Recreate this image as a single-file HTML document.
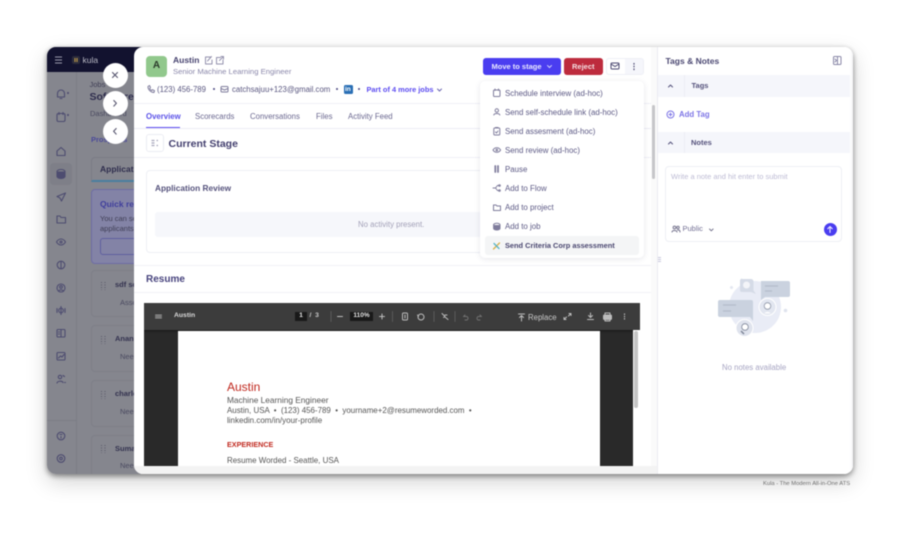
<!DOCTYPE html>
<html><head><meta charset="utf-8">
<style>
html,body{margin:0;padding:0;background:#fff;width:900px;height:533px;overflow:hidden}
body{font-family:"Liberation Sans",sans-serif;position:relative;color:#3f3b6b}
#all{position:absolute;left:0;top:0;width:900px;height:533px;filter:blur(.45px)}
.a{position:absolute}
.t{position:absolute;white-space:nowrap;line-height:12px;font-size:7.9px}
.b{font-weight:bold}
svg{position:absolute;left:0;top:0;fill:none}
.i{stroke:#7f7c9c;stroke-width:1;stroke-linecap:round;stroke-linejoin:round}
.s{stroke:#4d4c70;stroke-width:1.1;stroke-linecap:round;stroke-linejoin:round}
.c{position:absolute;width:25px;height:25px;border-radius:50%;background:#fff;left:102.5px}
</style></head><body><div id="all">

<!-- window -->
<div class="a" style="left:47px;top:47px;width:806px;height:427px;border-radius:9px;box-shadow:0 2px 6px rgba(0,0,0,.45),0 8px 22px rgba(0,0,0,.18)"></div>
<div class="a" style="left:47px;top:47px;width:100px;height:427px;background:#85868e;border-radius:9px 0 0 9px;overflow:hidden">
  <div class="a" style="left:0;top:0;width:100px;height:25px;background:#12122f"></div>
  <div class="a" style="left:29px;top:25px;width:1px;height:402px;background:#7c7d86"></div>
  <div class="a" style="left:3px;top:116px;width:22px;height:22px;border-radius:4px;background:#7e7f88"></div>
  <div class="a" style="left:0;top:373px;width:29px;height:1px;background:#7c7d86"></div>
</div>
<svg width="900" height="533">
  <path d="M55 57h7M55 60h7M55 63h7" stroke="#9a9aaa" stroke-width="1"/>
  <rect x="72" y="56" width="8" height="8" rx="2" fill="#2c2c3c"/>
  <path d="M75 58v4M77 58v4" stroke="#c9a04a" stroke-width="1"/>
  <g class="s">
    <path d="M57.500 97v-3.500a3.500 3.500 0 0 1 7 0v3.500zM60 98.500h2"/>
    <rect x="57" y="113.500" width="8" height="8" rx="1.500"/><path d="M59 112.500v2M63 112.500v2"/>
    <path d="M57 151l4-3.500 4 3.500v4.500h-8z"/>
    <ellipse cx="61" cy="171.500" rx="4" ry="2"/><path d="M57 171.500v5c0 1 2 2 4 2s4-1 4-2v-5" fill="#4d4c70"/>
    <path d="M65.500 193l-8.500 3.500 3 1.500 1.500 3z"/>
    <path d="M57 216h3l1 1.500h4.500v5.500h-8.500z"/>
    <path d="M56.500 242c1.500-2.500 3-3 4.500-3s3 .5 4.500 3c-1.500 2.500-3 3-4.500 3s-3-.5-4.500-3z"/><circle cx="61" cy="242" r="1"/>
    <circle cx="61" cy="265" r="3.800"/><path d="M61 261.500v7"/>
    <circle cx="61" cy="288" r="4"/><circle cx="61" cy="287" r="1.300"/><path d="M58.500 291c1-1.500 4-1.500 5 0"/>
    <circle cx="61" cy="310.500" r="2.300"/><path d="M57 308.500v4M65 308.500v4M61 306.500v8"/>
    <rect x="57" y="329.500" width="8" height="7.500" rx="1"/><path d="M61 329.500v7.500M58.500 332h1M58.500 334h1"/>
    <rect x="57" y="352.500" width="8" height="7.500" rx="1"/><path d="M58.500 358l2-2 1.500 1 2-2.500"/>
    <circle cx="60" cy="377" r="1.700"/><path d="M57 383c.5-2 5-2.500 6-.5M63 375.500l1.500 1M64.500 382.500h1"/>
    <circle cx="61" cy="436" r="3.800"/><path d="M61 436.500v1.500M60 434.500h2"/>
    <circle cx="61" cy="458.500" r="3.800"/><circle cx="61" cy="458.500" r="1.300"/>
    <path d="M68 92.800v.4M68 114.800v.4" stroke-width="1.800"/>
  </g>
</svg>
<div class="t" style="left:82.500px;top:54px;font-size:8.500px;color:#b9b9c4">kula</div>
<div class="t" style="left:89.500px;top:79px;font-size:7.500px;color:#3f3e55">Jobs</div>
<div class="t b" style="left:89.500px;top:91px;font-size:10.500px;color:#2e2d4d">Software</div>
<div class="t" style="left:90px;top:108px;font-size:7.500px;color:#4a4a60">Dashboard</div>
<div class="t b" style="left:91px;top:134px;font-size:7.500px;color:#4b4a99">Prospects</div>
<div class="a" style="left:91px;top:157px;width:60px;height:25px;border-radius:4px 4px 0 0;background:#85868e;border:1px solid #7b7c86;border-bottom:2px solid #4a7f9f;box-sizing:border-box"></div>
<div class="t b" style="left:100px;top:163px;font-size:8.500px;color:#2e2d4d">Applications</div>
<div class="a" style="left:91px;top:189px;width:60px;height:75px;border-radius:4px;background:#8383a6;border:1px solid #6e6da5;box-sizing:border-box"></div>
<div class="t b" style="left:100px;top:198px;font-size:8.500px;color:#3f3e9c">Quick review</div>
<div class="t" style="left:100px;top:213px;font-size:7.500px;color:#3f3e55">You can see</div>
<div class="t" style="left:100px;top:223px;font-size:7.500px;color:#3f3e55">applicants</div>
<div class="a" style="left:100px;top:238px;width:50px;height:17px;border:1px solid #5f5fa0;border-radius:3px;box-sizing:border-box"></div>

<!-- sidebar candidate cards -->
<div class="a" style="left:91px;top:270px;width:60px;height:47px;border:1px solid #7e7f88;border-radius:4px;box-sizing:border-box"></div>
<div class="a" style="left:91px;top:325px;width:60px;height:47px;border:1px solid #7e7f88;border-radius:4px;box-sizing:border-box"></div>
<div class="a" style="left:91px;top:380px;width:60px;height:47px;border:1px solid #7e7f88;border-radius:4px;box-sizing:border-box"></div>
<div class="a" style="left:91px;top:435px;width:60px;height:39px;border:1px solid #7e7f88;border-bottom:0;border-radius:4px 4px 0 0;box-sizing:border-box"></div>
<div class="t b" style="left:115px;top:279px;font-size:7.500px;color:#33324f">sdf sdf</div>
<div class="t b" style="left:115px;top:333px;font-size:7.500px;color:#33324f">Anand</div>
<div class="t b" style="left:115px;top:388px;font-size:7.500px;color:#33324f">charles</div>
<div class="t b" style="left:115px;top:443px;font-size:7.500px;color:#33324f">Suma</div>
<div class="t" style="left:120px;top:297px;font-size:7.500px;color:#4a4a60">Assess</div>
<div class="t" style="left:120px;top:351px;font-size:7.500px;color:#4a4a60">Need</div>
<div class="t" style="left:120px;top:406px;font-size:7.500px;color:#4a4a60">Need</div>
<div class="t" style="left:120px;top:460px;font-size:7.500px;color:#4a4a60">Need</div>
<svg width="900" height="533"><g stroke="#5c5c6c" stroke-width="1.100" stroke-dasharray="1 1.500">
  <path d="M101.500 282v8M105 282v8M101.500 336v8M105 336v8M101.500 391v8M105 391v8M101.500 445v8M105 445v8"/>
</g></svg>

<!-- main panel -->
<div class="a" style="left:134px;top:47px;width:719px;height:427px;background:#fff;border-radius:9px;overflow:hidden">
  <div class="a" style="left:0;top:56px;width:523px;height:1px;background:#f0f0f6"></div>
  <div class="a" style="left:0;top:81px;width:523px;height:1px;background:#ecedf5"></div>
  <div class="a" style="left:0;top:110px;width:523px;height:1px;background:#f0f0f6"></div>
  <div class="a" style="left:0;top:218px;width:523px;height:1px;background:#f2f2f7"></div>
  <div class="a" style="left:0;top:245px;width:523px;height:1px;background:#f2f2f7"></div>
  <div class="a" style="left:12px;top:123px;width:492px;height:83px;border:1px solid #eeeff5;border-radius:4px;box-sizing:border-box"></div>
  <div class="a" style="left:21px;top:165px;width:473px;height:25px;background:#f6f7fb;border-radius:3px"></div>
  <div class="a" style="left:0;top:419px;width:523px;height:8px;background:#f3f3f3"></div>
  <div class="a" style="left:523px;top:0;width:1px;height:427px;background:#ececf2"></div>
  <div class="a" style="left:517px;top:0;width:6px;height:419px;background:#fafafa"></div>
  <div class="a" style="left:518px;top:58px;width:3px;height:74px;background:#c6c6c9;border-radius:2px"></div>
  <div class="a" style="left:524px;top:28px;width:195px;height:22px;background:#f5f6fb"></div>
  <div class="a" style="left:524px;top:85px;width:195px;height:21px;background:#f5f6fb"></div>
  <div class="a" style="left:550px;top:28px;width:1px;height:22px;background:#edeef5"></div>
  <div class="a" style="left:550px;top:85px;width:1px;height:21px;background:#edeef5"></div>
  <div class="a" style="left:531px;top:119px;width:177px;height:76px;border:1px solid #eeeff5;border-radius:4px;box-sizing:border-box"></div>
  <div class="a" style="left:716px;top:0;width:3px;height:427px;background:linear-gradient(90deg,#fff,#f4f4f6)"></div>
</div>

<!-- nav buttons -->
<div class="c" style="top:62.500px"></div>
<div class="c" style="top:90.500px"></div>
<div class="c" style="top:118.500px"></div>
<svg width="900" height="533"><g stroke="#57566f" stroke-width="1.100" stroke-linecap="round" stroke-linejoin="round">
  <path d="M112.500 72.500l5 5M117.500 72.500l-5 5"/>
  <path d="M113.800 100.500l2.600 2.800-2.600 2.800"/>
  <path d="M116.200 128.500l-2.600 2.800 2.600 2.800"/>
</g></svg>

<!-- header -->
<div class="a" style="left:146px;top:56px;width:21px;height:20.500px;border-radius:4px;background:#91c88c"></div>
<div class="t b" style="left:146px;top:60px;width:21px;text-align:center;font-size:10px;color:#2a3a2a">A</div>
<div class="t b" style="left:173px;top:54px;font-size:8.500px;color:#47436f">Austin</div>
<svg width="900" height="533"><g class="i" style="stroke:#9492ae">
  <path d="M210.500 57h-5v7h6.500v-4M207.500 61l4-4.500"/>
  <path d="M220.500 57.500h-4v6.500h6.500v-4M219.500 60.500l3.800-3.800M221 56.500h2.500v2.500"/>
</g><g class="i">
  <path d="M148 86.500c0 3.500 3 6 6 6l.5-1.800-2-1-1 .8c-.8-.4-1.500-1.200-1.800-2l.8-1-1-2z"/>
  <rect x="221" y="86.500" width="7" height="5.500" rx="1"/><path d="M221 88.500l3.500 1.500 3.500-1.500"/>
</g></svg>
<div class="t" style="left:173px;top:66px;font-size:7.700px;color:#8a87aa">Senior Machine Learning Engineer</div>
<div class="t" style="left:157px;top:83.500px;font-size:7.800px;color:#5a5780">(123) 456-789</div>
<div class="a" style="left:212.500px;top:88px;width:2.400px;height:2.400px;border-radius:50%;background:#4b4880"></div>
<div class="t" style="left:232px;top:83.500px;font-size:7.800px;color:#5a5780">catchsajuu+123@gmail.com</div>
<div class="a" style="left:335.500px;top:88px;width:2.400px;height:2.400px;border-radius:50%;background:#4b4880"></div>
<div class="a" style="left:344px;top:85px;width:8.500px;height:8.500px;border-radius:1.500px;background:#2a6fb5"></div>
<div class="t b" style="left:345px;top:83.500px;font-size:6.500px;color:#fff">in</div>
<div class="a" style="left:358px;top:88px;width:2.400px;height:2.400px;border-radius:50%;background:#4b4880"></div>
<div class="t b" style="left:366.500px;top:83.500px;font-size:7.400px;color:#5b4bf0">Part of 4 more jobs</div>
<svg width="900" height="533"><path d="M437.500 89l2 2 2-2" stroke="#6a66b0" stroke-width="1" stroke-linecap="round"/></svg>

<!-- actions -->
<div class="a" style="left:483px;top:58px;width:78px;height:17px;border-radius:3px;background:#4a3df0"></div>
<div class="t b" style="left:491.500px;top:60.500px;font-size:7.500px;color:#e9e8ff">Move to stage</div>
<svg width="900" height="533"><path d="M547.500 65.500l2 2 2-2" stroke="#cfcdfa" stroke-width="1" stroke-linecap="round"/></svg>
<div class="a" style="left:564px;top:58px;width:38.500px;height:17px;border-radius:3px;background:#bd2b3d"></div>
<div class="t b" style="left:564px;top:60.500px;width:38.500px;text-align:center;font-size:7.500px;color:#f5dfe2">Reject</div>
<div class="a" style="left:606px;top:58px;width:38px;height:17px;border-radius:3px;border:1px solid #eeeff6;box-sizing:border-box;background:linear-gradient(90deg,#fff 50%,#f5f6fb 50%)"></div>
<svg width="900" height="533">
  <rect x="611" y="63" width="8" height="6" rx="1" stroke="#4a4870" stroke-width="1"/>
  <path d="M611 64l4 2.500 4-2.500" stroke="#4a4870" stroke-width="1"/>
  <path d="M634 63.500v.6M634 66.200v.6M634 69v.6" stroke="#4a4870" stroke-width="1.200" stroke-linecap="round"/>
</svg>

<!-- tabs -->
<div class="t b" style="left:146px;top:110.500px;font-size:7.800px;color:#5b52e8">Overview</div>
<div class="a" style="left:146px;top:127px;width:34px;height:1.200px;background:#5b4bf0"></div>
<div class="t" style="left:195px;top:110.500px;font-size:7.800px;color:#6b6890">Scorecards</div>
<div class="t" style="left:250px;top:110.500px;font-size:7.800px;color:#6b6890">Conversations</div>
<div class="t" style="left:316px;top:110.500px;font-size:7.800px;color:#6b6890">Files</div>
<div class="t" style="left:348px;top:110.500px;font-size:7.800px;color:#6b6890">Activity Feed</div>

<!-- current stage -->
<div class="a" style="left:146px;top:134px;width:18px;height:18px;border:1px solid #ebecf3;border-radius:3px;box-sizing:border-box"></div>
<svg width="900" height="533"><path d="M151.500 140.500h3M151.500 143h3M151.500 145.500h3M156.500 140.500h1.500M156.500 145.500h1.500" stroke="#a9a8bd" stroke-width="1.200"/></svg>
<div class="t b" style="left:168.500px;top:137.500px;font-size:10.500px;color:#44406f">Current Stage</div>
<div class="t b" style="left:155px;top:181.500px;font-size:8.300px;color:#55527c">Application Review</div>
<div class="t" style="left:358px;top:219px;font-size:7.800px;color:#a3a1b8">No activity present.</div>
<div class="t b" style="left:146px;top:274px;font-size:10px;color:#47437d">Resume</div>

<!-- PDF -->
<div class="a" style="left:144px;top:303px;width:496px;height:163px;background:#292929;overflow:hidden">
  <div class="a" style="left:0;top:0;width:496px;height:27px;background:#3c3c3c;box-shadow:0 1px 2px rgba(0,0,0,.5)"></div>
  <div class="a" style="left:34px;top:28px;width:422px;height:140px;background:#fff"></div>
  <div class="a" style="left:489px;top:27px;width:7px;height:136px;background:#fff"></div>
  <div class="a" style="left:489.500px;top:28px;width:4px;height:77px;background:#c4c4c4;border-radius:2px"></div>
</div>
<svg width="900" height="533"><g stroke="#bdbdbd" stroke-width="1" stroke-linecap="round" stroke-linejoin="round">
  <path d="M155.500 315h6M155.500 316.500h6M155.500 318h6" stroke="#9a9a9a"/>
  <path d="M337.500 316.500h5M379.500 316.500h5M382 314v5"/>
  <path d="M331 311.500v10M392.500 311.500v10M434 311.500v10M455 311.500v10" stroke="#5a5a5a"/>
  <rect x="402.500" y="313" width="5" height="7" rx="1"/><path d="M405 315v3"/>
  <circle cx="421" cy="317" r="3"/><path d="M417.500 315l1 1.500"/>
  <path d="M442 313.500l3 3-1.500 1M445 317l3 2.500M445 315h2"/>
  <path d="M463.500 316.500h3.500a2 2 0 0 1 0 3.500h-2M463.500 316.500l1.500-1.500M481.500 316.500h-3.500a2 2 0 0 0 0 3.500h2M481.500 316.500l-1.500-1.500" stroke="#707070"/>
  <path d="M518.500 314h6M521.500 321v-5M519.500 317.500l2-2 2 2"/>
  <path d="M564 319.500l2.500-2.500M564 319.500h2M564 319.500v-2M571 313.500l-2.500 2.500M571 313.500h-2M571 313.500v2"/>
  <path d="M590.500 313v4M588.500 315.500l2 2 2-2M587.500 319.500h6"/>
  <rect x="603.500" y="315" width="8" height="4.500" rx="1" fill="#bdbdbd"/><path d="M605 315v-2h5v2M605 319v2h5v-2"/>
  <path d="M624.500 314v.4M624.500 316.300v.4M624.500 318.600v.4" stroke-width="1.200"/>
</g></svg>
<div class="t b" style="left:174px;top:310px;font-size:6.800px;color:#dcdcdc">Austin</div>
<div class="a" style="left:295px;top:312px;width:12px;height:8.500px;background:#191919"></div>
<div class="t b" style="left:295px;top:310px;width:12px;text-align:center;font-size:6.800px;color:#e6e6e6">1</div>
<div class="t b" style="left:309.500px;top:310px;font-size:6.800px;color:#c8c8c8">/ &nbsp;3</div>
<div class="a" style="left:350px;top:312px;width:23px;height:8.500px;background:#191919"></div>
<div class="t b" style="left:350px;top:310px;width:23px;text-align:center;font-size:6.500px;color:#e6e6e6">110%</div>
<div class="t" style="left:528px;top:311.500px;font-size:7.800px;color:#c8c8c8">Replace</div>

<div class="t" style="left:227px;top:381px;font-size:12px;color:#c0281e">Austin</div>
<div class="t" style="left:227px;top:394px;font-size:8.300px;color:#555">Machine Learning Engineer</div>
<div class="t" style="left:227px;top:405px;font-size:7.950px;color:#555">Austin, USA &nbsp;•&nbsp; (123) 456-789 &nbsp;•&nbsp; yourname+2@resumeworded.com &nbsp;•</div>
<div class="t" style="left:227px;top:414.500px;font-size:8px;color:#555">linkedin.com/in/your-profile</div>
<div class="t b" style="left:227px;top:438.500px;font-size:7.200px;color:#c0281e">EXPERIENCE</div>
<div class="t" style="left:227px;top:454.500px;font-size:7.950px;color:#555">Resume Worded - Seattle, USA</div>

<!-- dropdown -->
<div class="a" style="left:480px;top:81px;width:164px;height:177px;background:#fff;border-radius:5px;box-shadow:0 1px 6px rgba(60,60,100,.13)"></div>
<div class="a" style="left:485px;top:236px;width:154px;height:19px;background:#f4f5f6;border-radius:3px"></div>
<div class="t" style="left:505px;top:87.500px;color:#5d5a85">Schedule interview (ad-hoc)</div>
<div class="t" style="left:505px;top:106.500px;color:#5d5a85">Send self-schedule link (ad-hoc)</div>
<div class="t" style="left:505px;top:125.500px;color:#5d5a85">Send assesment (ad-hoc)</div>
<div class="t" style="left:505px;top:144.500px;color:#5d5a85">Send review (ad-hoc)</div>
<div class="t" style="left:505px;top:163.500px;color:#5d5a85">Pause</div>
<div class="t" style="left:505px;top:182.500px;color:#5d5a85">Add to Flow</div>
<div class="t" style="left:505px;top:201.500px;color:#5d5a85">Add to project</div>
<div class="t" style="left:505px;top:220.500px;color:#5d5a85">Add to job</div>
<div class="t b" style="left:505px;top:239.500px;font-size:7.400px;color:#4a4770">Send Criteria Corp assessment</div>
<svg width="900" height="533"><g class="i">
  <rect x="493.500" y="90" width="6.500" height="6.500" rx="1"/><path d="M495 89v1.500M498.500 89v1.500"/>
  <circle cx="496.800" cy="110.500" r="1.700"/><path d="M493.800 115c.5-2 5.500-2 6 0"/>
  <rect x="493.800" y="128" width="6" height="7" rx="1"/><path d="M495.500 127.500h2.500M495.500 132l1 1 1.500-2"/>
  <path d="M493 150c1-1.800 2.500-2.300 3.800-2.300s2.800.5 3.800 2.300c-1 1.800-2.500 2.300-3.800 2.300s-2.800-.5-3.800-2.300z"/><circle cx="496.800" cy="150" r=".8"/>
  <path d="M495.300 166v6M498 166v6" stroke-width="1.800" stroke-dasharray="1 .8"/>
  <path d="M493 188h2.500M495.500 188l2-2.500h1.500M495.500 188l2 2.500h1.500"/><circle cx="499.500" cy="185.500" r=".8"/><circle cx="499.500" cy="190.500" r=".8"/>
  <path d="M493.500 205h2.500l1 1h3.500v4.500h-7z"/>
  <ellipse cx="496.800" cy="224.800" rx="3.200" ry="1.500"/><path d="M493.600 225v3.500c0 .8 1.500 1.500 3.200 1.500s3.200-.7 3.200-1.500v-3.500" fill="#7f7c9c"/>
  <path d="M493.500 249l6-6" style="stroke:#d9b24a;stroke-width:1.300"/><path d="M494 243.500l5 5" style="stroke:#56b4c9;stroke-width:1.300"/>
</g></svg>

<!-- right panel -->
<div class="t b" style="left:665.500px;top:55px;font-size:8.500px;color:#4b4872">Tags &amp; Notes</div>
<svg width="900" height="533"><g stroke="#8a88a8" stroke-width="1" stroke-linecap="round" stroke-linejoin="round">
  <rect x="833.500" y="56.500" width="7.500" height="8" rx="1"/><path d="M837.500 56.500v8M835 59l1.500 1.500L835 62"/>
  <path d="M668.500 87l2-2 2 2M668.500 144l2-2 2 2" stroke="#55537c"/>
  <circle cx="670.500" cy="114.500" r="3.500" stroke="#7d75e6"/><path d="M669 114.500h3M670.500 113v3" stroke="#7d75e6"/>
  <circle cx="674.500" cy="227.500" r="1.400" stroke="#77758f"/><circle cx="678" cy="227.500" r="1.200" stroke="#77758f"/>
  <path d="M672 232c.3-2 4.500-2 5 0M677.500 230h1c1 0 1.500 1 1.500 2" stroke="#77758f"/>
  <path d="M709.500 229l1.800 1.800 1.800-1.800" stroke="#77758f"/>
</g></svg>
<div class="t b" style="left:691.500px;top:80px;font-size:7.500px;color:#55527c">Tags</div>
<div class="t b" style="left:679px;top:108.500px;font-size:7.800px;color:#7d75e6">Add Tag</div>
<div class="t b" style="left:691px;top:137px;font-size:7.500px;color:#55527c">Notes</div>
<div class="t" style="left:671px;top:171px;font-size:7.500px;color:#bdbbd4">Write a note and hit enter to submit</div>
<div class="t" style="left:682.500px;top:223px;font-size:7.500px;color:#716e93">Public</div>
<div class="a" style="left:823.500px;top:222.500px;width:13px;height:13px;border-radius:50%;background:#4a3df0"></div>
<svg width="900" height="533"><path d="M830 232.500v-6M827.800 228.700l2.200-2.200 2.200 2.200" stroke="#e9e8ff" stroke-width="1.100" stroke-linecap="round" stroke-linejoin="round"/></svg>
<svg width="900" height="533"><path d="M658 257.500h3M658 259.500h3M658 261.500h3" stroke="#c9c8dc" stroke-width="1"/></svg>

<!-- illustration -->
<svg width="900" height="533">
  <circle cx="755" cy="307" r="26" fill="#e9ecf6"/>
  <circle cx="731.500" cy="287.500" r="1.500" fill="#e4e7f1"/>
  <circle cx="785.500" cy="310.500" r="1.800" fill="#dfe3ee"/>
  <path d="M742 279h9a2.500 2.500 0 0 1 2.500 2.500v9l2.500 3.500-5-2h-9a2 2 0 0 1-2-2v-9a2.500 2.500 0 0 1 2-2.500z" fill="#d5dbe7"/>
  <circle cx="746.500" cy="285" r="3.500" fill="#f3f4f8"/>
  <path d="M761 281h27a2 2 0 0 1 2 2v12a2 2 0 0 1-2 2h-23l-4 3z" fill="#cad2df"/>
  <path d="M765 286h13M765 291h7" stroke="#b4bdcb" stroke-width="1.300"/>
  <path d="M720 300h31a2 2 0 0 1 2 2v19l-3-4h-30a2 2 0 0 1-2-2v-13a2 2 0 0 1 2-2z" fill="#cad2df"/>
  <path d="M723 305h13M723 311h8" stroke="#b4bdcb" stroke-width="1.300"/>
  <circle cx="767.500" cy="307" r="8.500" fill="#e2e6f0" stroke="#fff" stroke-width="1"/>
  <circle cx="767.500" cy="306" r="3.300" fill="#fff" stroke="#8f97a8" stroke-width=".8"/>
  <path d="M764.500 313.500c.5-2 5.500-2 6 0" fill="#fff"/>
  <circle cx="744.500" cy="328" r="8.500" fill="#dfe3ed" stroke="#fff" stroke-width="1"/>
  <circle cx="745" cy="327" r="3.300" fill="#fff" stroke="#7e8698" stroke-width=".8"/>
  <path d="M741 331l3 3" stroke="#7e8698" stroke-width="1.500"/>
</svg>
<div class="t" style="left:722px;top:361.500px;font-size:7.800px;color:#a6a4c2">No notes available</div>

<!-- caption -->
<div class="t" style="left:763px;top:477.500px;font-size:5.800px;color:#6e6e6e">Kula - The Modern All-in-One ATS</div>

</div></body></html>
